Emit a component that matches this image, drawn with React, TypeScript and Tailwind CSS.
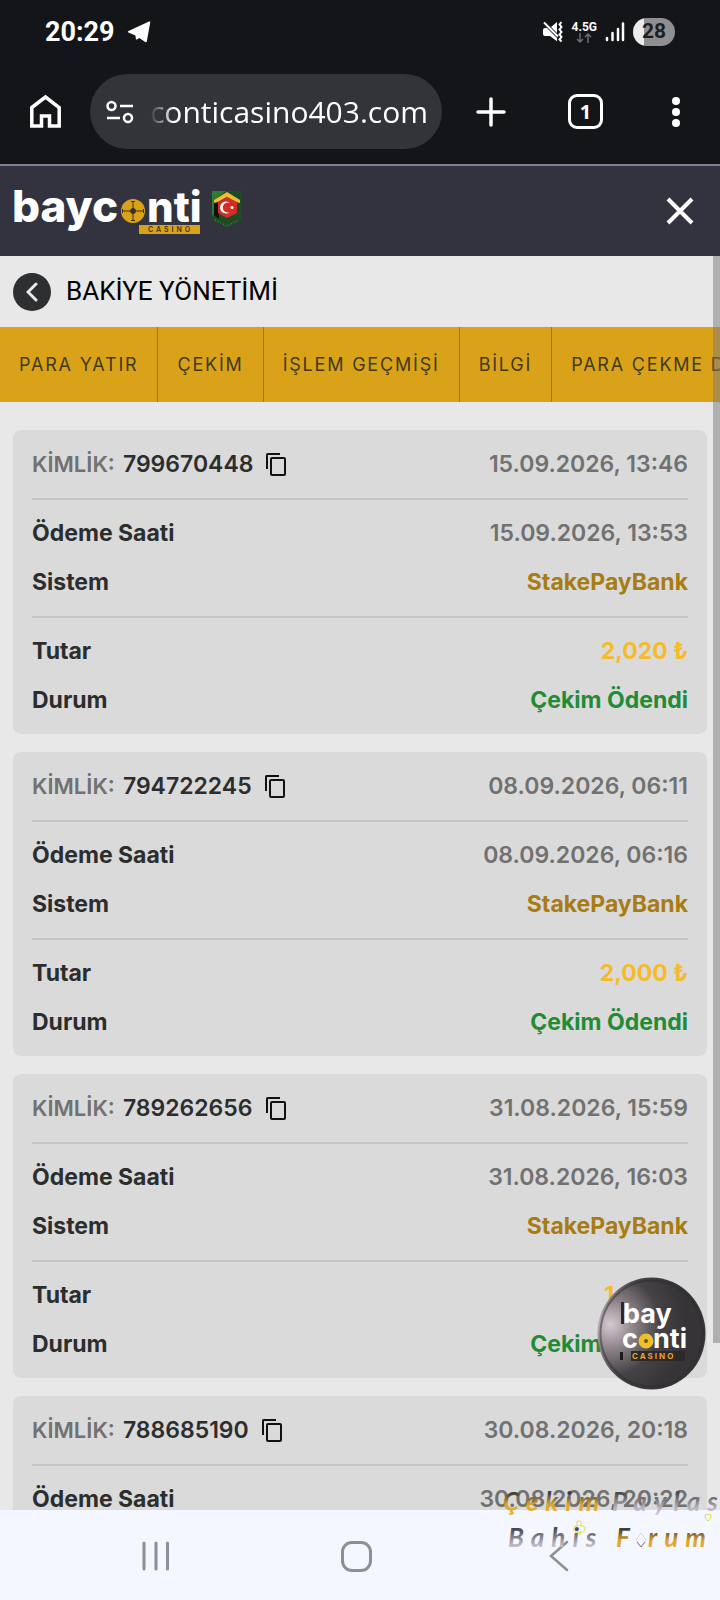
import React from 'react';

interface Payment {
  id: string;
  created: string;
  paid: string;
  system: string;
  amount: string;
  status: string;
}

const TABS = ['PARA YATIR', 'ÇEKİM', 'İŞLEM GEÇMİŞİ', 'BİLGİ', 'PARA ÇEKME D'];

const PAYMENTS: Payment[] = [
  { id: '799670448', created: '15.09.2026, 13:46', paid: '15.09.2026, 13:53', system: 'StakePayBank', amount: '2,020 ₺', status: 'Çekim Ödendi' },
  { id: '794722245', created: '08.09.2026, 06:11', paid: '08.09.2026, 06:16', system: 'StakePayBank', amount: '2,000 ₺', status: 'Çekim Ödendi' },
  { id: '789262656', created: '31.08.2026, 15:59', paid: '31.08.2026, 16:03', system: 'StakePayBank', amount: '1,000 ₺', status: 'Çekim Ödendi' },
  { id: '788685190', created: '30.08.2026, 20:18', paid: '30.08.2026, 20:22', system: 'StakePayBank', amount: '2,000 ₺', status: 'Çekim Ödendi' },
];

const StatusBar = () => (
  <div className="flex h-[62px] shrink-0 items-center justify-between px-[45px] pt-[2px] text-white">
    <div className="flex items-center gap-3">
      <span className="text-[27px] font-bold font-['Roboto',sans-serif]">20:29</span>
      <svg className="h-6 w-6" viewBox="0 0 24 24" fill="#fff">
        <path d="M23.3 2 19.800 21.600q-.4 1.200-1.600.4l-5.800-4-2.500 1.500q-.8.3-1-.6l-.5-3.400L1.400 12.600q-1.400-.7.1-1.600L22 1.600q1.300-.6 1.300.4Z" />
      </svg>
    </div>
    <div className="flex items-center gap-2">
      <svg className="h-[22px] w-[22px]" viewBox="0 0 22 22">
        <path d="M1 7h4l3.500 3.500L15 17v3.300L8 15H3q-2 0-2-2V9q0-2 2-2Zm8-1 6-5v11Z" fill="#fff" />
        <path d="m2 1.500 14 14" stroke="#fff" strokeWidth="2" />
        <path d="m19.500 1-2 2.500 2 2.500-2 2.500 2 2.500-2 2.500 2 2.500-2 2.500 2 2" fill="none" stroke="#fff" strokeWidth="2" />
      </svg>
      <div className="flex flex-col items-center">
        <span className="text-[12px] leading-3 font-bold font-['Roboto',sans-serif]">4.5G</span>
        <svg className="h-[10px] w-4" viewBox="0 0 16 10" fill="none" stroke="#6b6c70" strokeWidth="1.500">
          <path d="M4 0v9M1 6l3 3 3-3M12 10V1M9 4l3-3 3 3" />
        </svg>
      </div>
      <svg className="h-5 w-5" viewBox="0 0 20 20" fill="none" stroke="#fff" strokeWidth="2.500" strokeLinecap="round">
        <path d="M2 16v2M7.500 11v7M13 7v11M18 1.500V18" />
      </svg>
      <div className="flex h-7 w-[42px] items-center justify-center rounded-full bg-linear-to-r from-[#ececee] from-27% to-[#8f8f91] to-27%">
        <span className="text-[21px] font-bold text-[#1d1e22] font-['Roboto',sans-serif]">28</span>
      </div>
    </div>
  </div>
);

const BrowserBar = () => (
  <div className="flex h-[104px] shrink-0 items-center border-b-2 border-[#7f808b] pr-9 pb-[3px] pl-[29px]">
    <button aria-label="Ana sayfa" className="mr-[28px] shrink-0">
      <svg className="block h-[35px] w-[33px]" viewBox="0 0 33 35" fill="none" stroke="#fff" strokeWidth="3.500">
        <path d="M2.800 13.500 16.500 3 30.200 13.500V32H20.500V22H12.500V32H2.800Z" />
      </svg>
    </button>
    <div className="flex h-[75px] min-w-0 flex-1 items-center rounded-full bg-[#33343a] pr-[15px] pl-4">
      <svg className="mr-[15px] h-6 w-[29px] shrink-0" viewBox="0 0 29 24" fill="none" stroke="#fff" strokeWidth="2.500">
        <circle cx="5.500" cy="6" r="4" />
        <path d="M14 6h13M1 18h13" />
        <circle cx="22" cy="18" r="4" />
      </svg>
      <input
        aria-label="Adres"
        readOnly
        defaultValue="conticasino403.com"
        className="min-w-0 flex-1 bg-transparent text-[30px] text-white outline-none [mask-image:linear-gradient(to_right,transparent,black_24px)] font-['Open_Sans',sans-serif]"
      />
    </div>
    <button aria-label="Yeni sekme" className="ml-[33px] shrink-0">
      <svg className="block h-8 w-8" viewBox="0 0 32 32" stroke="#fff" strokeWidth="3.500" strokeLinecap="round">
        <path d="M16 3v26M3 16h26" />
      </svg>
    </button>
    <button aria-label="Sekmeler" className="ml-[61px] flex h-[35px] w-[35px] shrink-0 items-center justify-center rounded-[9px] border-[3px] border-white text-[20px] font-bold text-white font-['Open_Sans',sans-serif]">
      1
    </button>
    <button aria-label="Menü" className="ml-[65px] shrink-0">
      <svg className="block h-8 w-4" viewBox="0 0 16 32" fill="#fff">
        <circle cx="8" cy="5" r="4" />
        <circle cx="8" cy="16" r="4" />
        <circle cx="8" cy="27" r="4" />
      </svg>
    </button>
  </div>
);

const Logo = () => (
  <svg className="h-[50px] w-[232px] overflow-visible" viewBox="0 0 232 50" fontFamily="Inter, sans-serif">
    <g fill="#fff" fontSize="44" fontWeight="800">
      <text x="-1" y="36">bayc</text>
      <text x="134" y="36" fontSize="42">nti</text>
    </g>
    <circle cx="120" cy="25" r="12" fill="#daa218" />
    <g stroke="#3a3122" fill="#3a3122">
      <path d="M110 25h20M120 15v20M109.500 23v4M130.500 23v4M118 15.500h4M118 34.500h4" />
      <circle cx="120" cy="25" r="2.500" />
    </g>
    <rect x="126" y="39" width="61" height="9" fill="#daa218" />
    <text x="135" y="46" fontSize="7" fontWeight="600" letterSpacing="3" fill="#3a3122">CASINO</text>
    <path d="M199 5h30v29l-15 8-15-8Z" fill="#1f4a26" />
    <path d="M199 5h14l-12 9v14l-2 2Z" fill="#2f7a35" />
    <path d="m201 15 13-8v9l-8 4v13l-5-4Z" fill="#0e120c" />
    <path d="m201 14 13-8 13 8v3l-4-1-9-5-9 5-4 1Z" fill="#f0bd35" />
    <path d="m205 16 9-5 10 5v11l-10 5-9-5Z" fill="#d12c26" />
    <path d="M217 17a6 6 0 1 0 0 9 5 5 0 1 1 0-9Z" fill="#fff" />
    <circle cx="219" cy="21.500" r="1.500" fill="#fff" />
    <path d="m202 34 12 6 12-6" fill="none" stroke="#5f9a3a" strokeDasharray="1 2" />
  </svg>
);

const PaymentCard: React.FC<{ payment: Payment }> = ({ payment }) => (
  <article className="shrink-0 rounded-lg bg-[#dadada] px-[19px] text-[23px] font-bold text-[#2c2d2d]">
    <div className="flex h-[68px] items-center justify-between">
      <div className="flex items-center">
        <span className="mr-2 text-[22px] font-semibold text-[#717171]">KİMLİK:</span>
        <span className="font-semibold">{payment.id}</span>
        <button aria-label="Kopyala" className="ml-3">
          <svg className="block h-6 w-6" viewBox="0 0 24 24" fill="none" stroke="#111" strokeWidth="2">
            <path d="M2 17V2.500Q2 2 2.500 2H15" />
            <rect x="6" y="6" width="14" height="17" rx="1" />
          </svg>
        </button>
      </div>
      <span className="font-semibold text-[#717171]">{payment.created}</span>
    </div>
    <dl className="border-t-2 border-[#c3c3c3] py-[9px] leading-[49px]">
      <div className="flex justify-between">
        <dt>Ödeme Saati</dt>
        <dd className="font-semibold text-[#717171]">{payment.paid}</dd>
      </div>
      <div className="flex justify-between">
        <dt>Sistem</dt>
        <dd className="text-[#a67c13]">{payment.system}</dd>
      </div>
    </dl>
    <dl className="border-t-2 border-[#c3c3c3] py-[9px] leading-[49px]">
      <div className="flex justify-between">
        <dt>Tutar</dt>
        <dd className="text-[#f5bb2d]">{payment.amount}</dd>
      </div>
      <div className="flex justify-between">
        <dt>Durum</dt>
        <dd className="text-[#228b36]">{payment.status}</dd>
      </div>
    </dl>
  </article>
);

const ChipBadge = () => (
  <button aria-label="Bayconti" className="absolute right-[14px] bottom-[120px]">
    <svg className="block h-[113px] w-[109px]" viewBox="0 0 109 113" fontFamily="Inter, sans-serif" fontWeight="700">
      <defs>
        <radialGradient id="chip" cx="0.12" cy="0.42" r="0.7">
          <stop offset="0" stopColor="#d6cbd2" />
          <stop offset="0.3" stopColor="#8f858b" />
          <stop offset="0.65" stopColor="#464346" />
          <stop offset="1" stopColor="#363437" />
        </radialGradient>
      </defs>
      <ellipse cx="54.500" cy="56.500" rx="54" ry="56" fill="url(#chip)" />
      <ellipse cx="54.500" cy="56.500" rx="51" ry="53" fill="none" stroke="#2e2c2f" strokeOpacity="0.5" strokeWidth="2" />
      <path d="M24 25h3v22h-3Z" fill="#2a282a" />
      <g fontSize="27" fill="#fff">
        <text x="26" y="46">bay</text>
        <text x="25" y="71">c</text>
        <text x="56" y="71">nti</text>
      </g>
      <circle cx="49" cy="64" r="7.500" fill="#f0bf2c" />
      <circle cx="49" cy="64" r="2" fill="#6d5410" />
      <path d="M23 75h3v8h-3Z" fill="#1b1b1b" />
      <path d="M34 74h54v10H34Z" fill="#2b2929" />
      <text x="35" y="82" fontSize="8" letterSpacing="2" fill="#eda424">CASINO</text>
    </svg>
  </button>
);

const Watermark = () => (
  <svg
    className="pointer-events-none absolute right-0 bottom-[45px] h-[70px] w-[220px] overflow-visible"
    viewBox="0 0 220 70"
    fontFamily="Lato, sans-serif"
    fontStyle="italic"
    fontWeight="700"
    fontSize="26"
    letterSpacing="7"
  >
    <defs>
      <linearGradient id="gold" x1="0" y1="0" x2="0" y2="1">
        <stop offset="0.25" stopColor="#3f3c33" />
        <stop offset="0.6" stopColor="#d9a32d" />
        <stop offset="1" stopColor="#f0b63a" />
      </linearGradient>
      <linearGradient id="silver" x1="0" y1="0" x2="0" y2="1">
        <stop offset="0.25" stopColor="#4a4a4c" />
        <stop offset="0.7" stopColor="#b5afba" />
        <stop offset="1" stopColor="#ddd5e0" />
      </linearGradient>
    </defs>
    <text x="3" y="26" fill="url(#gold)">Çekim</text>
    <text x="112" y="26" fill="url(#silver)">Paylas</text>
    <text x="8" y="62" fill="url(#silver)">Bahis</text>
    <text x="116" y="62" fill="url(#gold)">F</text>
    <text x="148" y="62" fill="url(#gold)">rum</text>
    <path d="m141 48 5 7-5 7-5-7Z" fill="none" stroke="#e8d3d9" />
    <path d="m137 57 4 5 4-5" fill="none" stroke="#77777b" />
    <path d="M79 47q-5 1-5-3t4-3q-3-5 1-5t1 5q5-1 5 3t-5 3v3Z" fill="none" stroke="#dedb45" />
    <path d="M208 36q-4-3-3-6 2-2 3 0 2-2 3 0 1 3-3 6Z" fill="none" stroke="#dedb45" />
  </svg>
);

const NavBar = () => (
  <nav className="relative flex h-[90px] shrink-0 items-center justify-between bg-[#f4f7ff] pt-[2px] pr-[151px] pl-[141px]">
    <button aria-label="Son uygulamalar">
      <svg className="block h-8 w-[30px]" viewBox="0 0 30 32" stroke="#8c8f93" strokeWidth="3" strokeLinecap="round">
        <path d="M3 3v26M15 3v26M26.500 3v26" />
      </svg>
    </button>
    <button aria-label="Ana ekran" className="mr-2 h-[31px] w-[31px] rounded-[11px] border-[3px] border-[#8c8f93]" />
    <button aria-label="Geri">
      <svg className="block h-8 w-5" viewBox="0 0 20 32" fill="none" stroke="#8c8f93" strokeWidth="2.500" strokeLinecap="round">
        <path d="M18 2 2 16l16 14" />
      </svg>
    </button>
    <Watermark />
  </nav>
);

export default function App() {
  return (
    <div className="flex h-screen flex-col overflow-hidden bg-[#141519] font-['Inter',sans-serif]">
      <StatusBar />
      <BrowserBar />
      <header className="flex h-[90px] shrink-0 items-center justify-between bg-[#32333f] pr-[26px] pl-[13px]">
        <Logo />
        <button aria-label="Kapat">
          <svg className="block h-7 w-7" viewBox="0 0 28 28" stroke="#fff" strokeWidth="4">
            <path d="m2 2 24 24M26 2 2 26" />
          </svg>
        </button>
      </header>
      <main className="relative flex min-h-0 flex-1 flex-col overflow-hidden bg-[#e8e8e8]">
        <div className="flex h-[71px] shrink-0 items-center gap-[15px] px-[13px]">
          <button aria-label="Geri dön" className="flex h-[38px] w-[38px] items-center justify-center rounded-full bg-[#2e2f30]">
            <svg className="h-5 w-3" viewBox="0 0 12 20" fill="none" stroke="#e8e8e8" strokeWidth="3" strokeLinecap="round">
              <path d="m10 2-8 8 8 8" />
            </svg>
          </button>
          <h1 className="text-[26px] text-black font-['Roboto',sans-serif]">BAKİYE YÖNETİMİ</h1>
        </div>
        <div className="flex h-[75px] shrink-0 overflow-hidden bg-[#daa218]">
          {TABS.map((tab) => (
            <button key={tab} className="shrink-0 border-r border-[#a07818] px-[19px] text-[18px] tracking-widest whitespace-nowrap text-[#413a1b] last:border-r-0">
              {tab}
            </button>
          ))}
        </div>
        <section className="flex min-h-0 flex-1 flex-col gap-[18px] overflow-hidden px-[13px] pt-7">
          {PAYMENTS.map((payment) => (
            <PaymentCard key={payment.id} payment={payment} />
          ))}
        </section>
        <div className="absolute top-0 right-0 h-13/15 w-[7px] bg-[#787878]/50" />
        <ChipBadge />
      </main>
      <NavBar />
    </div>
  );
}
